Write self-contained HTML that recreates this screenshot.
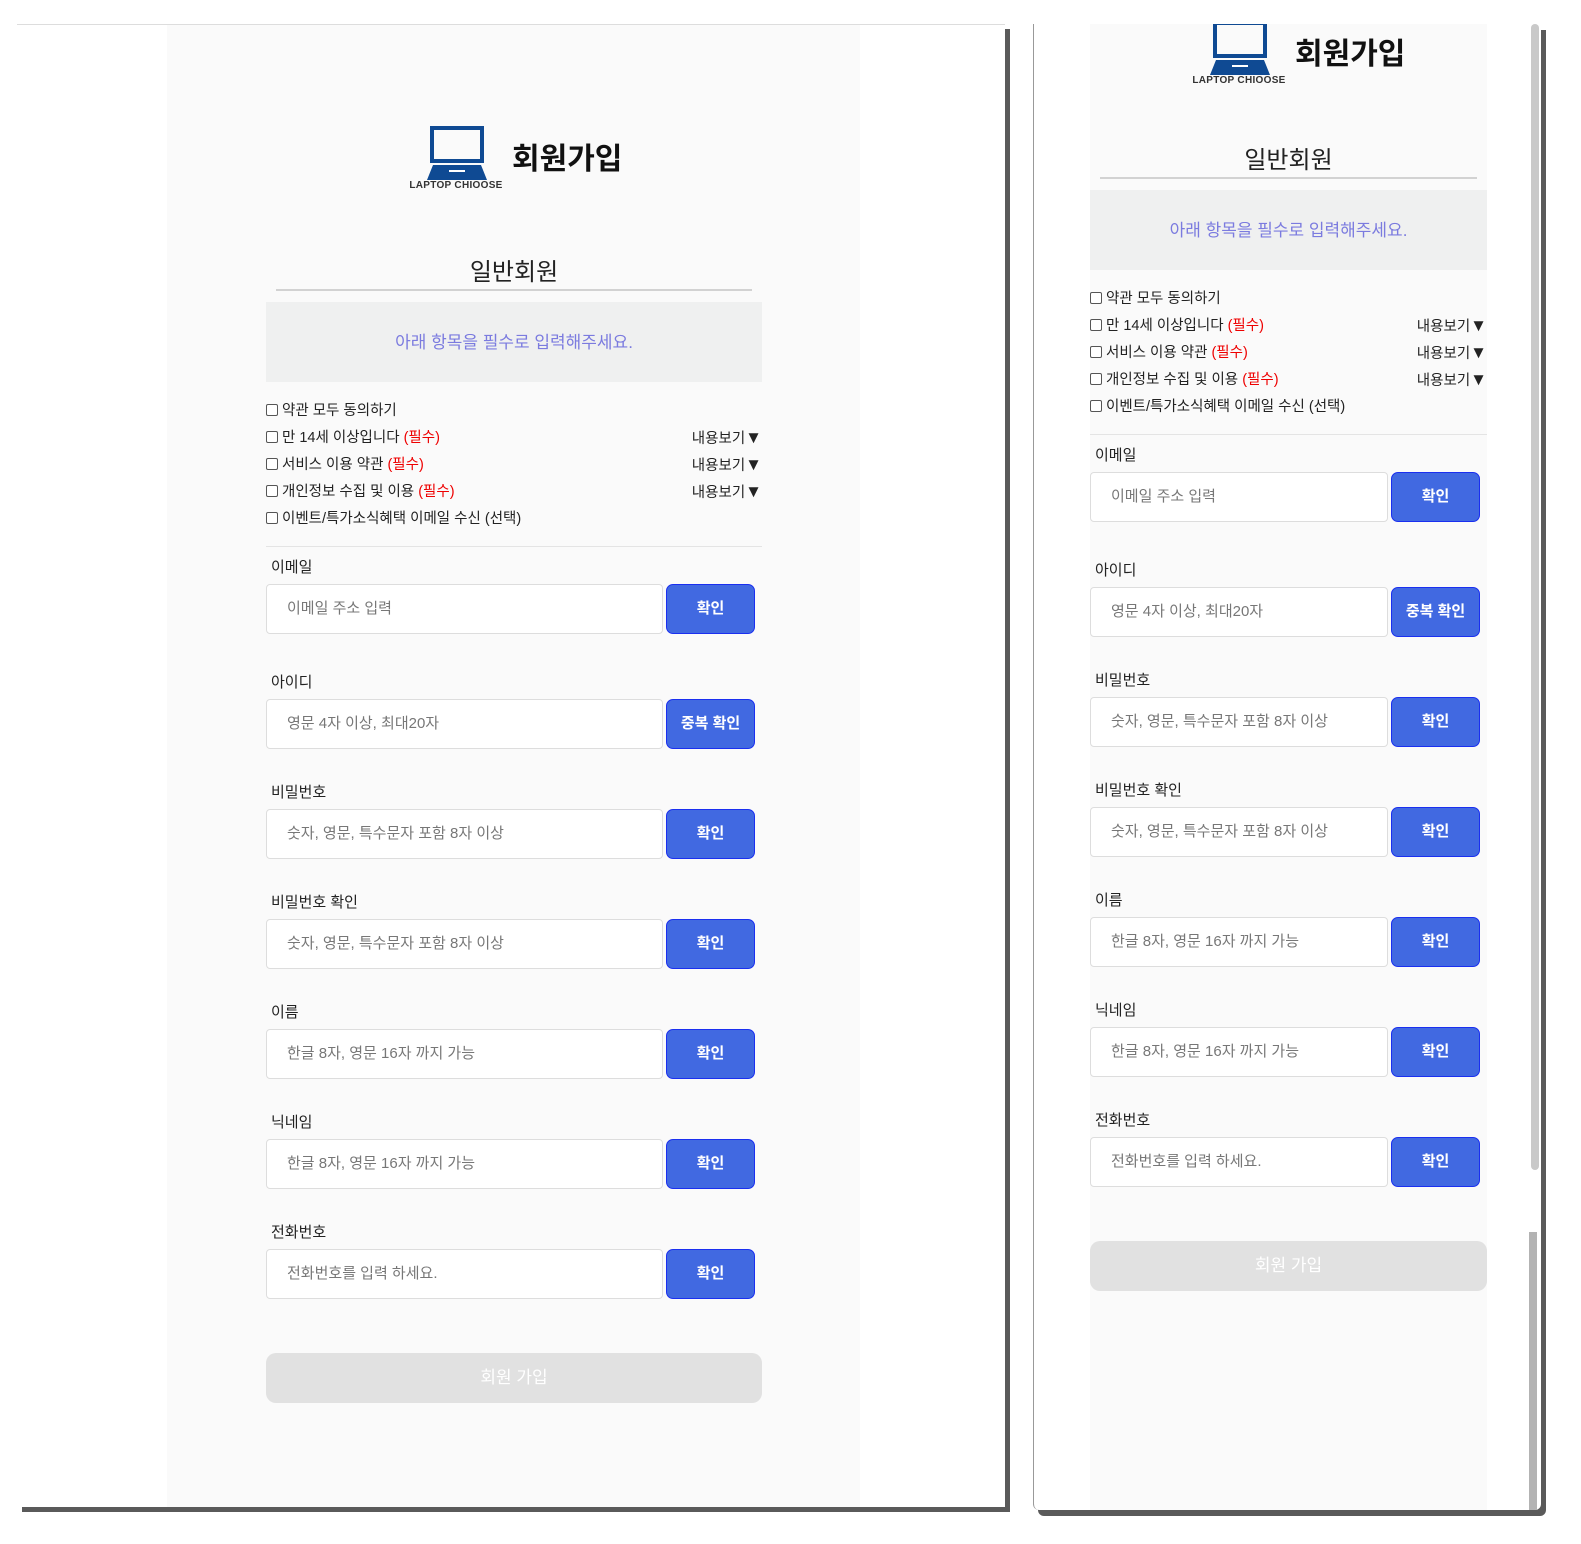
<!DOCTYPE html>
<html><head><meta charset="utf-8"><style>
*{box-sizing:border-box;margin:0;padding:0}
body{width:1581px;height:1544px;background:#fff;position:relative;overflow:hidden;font-family:"Liberation Sans","Noto Sans CJK KR",sans-serif;color:#222}
.abs{position:absolute}
.panelL{left:17px;top:24px;width:988px;height:1483px;background:#fff;border-top:1px solid #ddd;box-shadow:5px 5px 0 #5a5a5a}
.panelR{left:1033px;top:24px;width:508px;height:1486px;background:#fff;border-left:1px solid #999;box-shadow:5px 6px 0 #5a5a5a;overflow:hidden;border-radius:0 0 6px 6px}
.inner{background:#fafafa;top:0;bottom:0}
.form{position:absolute}
.logo{position:absolute;width:230px;height:80px}
.logo svg{position:absolute;left:19px;top:0}
.logo .lt{position:absolute;left:0;top:54px;width:96px;text-align:center;font:bold 10px "Liberation Sans",sans-serif;color:#333;letter-spacing:.3px}
.logo .tt{position:absolute;left:104px;top:8px;font-size:30px;font-weight:bold;color:#111;white-space:nowrap}
.sub{position:absolute;left:0;right:0;text-align:center;font-size:24px;color:#222}
.uline{position:absolute;left:10px;right:10px;height:2px;background:#d2d2d2}
.notice{position:absolute;left:0;right:0;height:80px;background:#eff0f0;color:#7b7bdf;font-size:17px;text-align:center;line-height:82px}
.row{position:absolute;left:0;right:0;height:20px;font-size:14.5px;line-height:20px;white-space:nowrap}
.cb{display:inline-block;width:12px;height:12px;border:1px solid #555;border-radius:2px;vertical-align:-1px;margin-right:4px;background:#fff}
.req{color:#e00}
.more{position:absolute;right:0;top:0}
.more b{font-size:17px;font-weight:normal;line-height:20px}
.hr{position:absolute;left:0;right:0;height:1px;background:#e4e4e4}
.lbl{position:absolute;left:5px;font-size:15px;color:#222}
.inp{position:absolute;left:0;height:50px;background:#fff;border:1px solid #ddd;border-radius:4px;font-size:15px;color:#777;line-height:48px;padding-left:20px;white-space:nowrap}
.btn{position:absolute;width:89px;height:50px;background:#4169e1;border:1.5px solid #1a2ff0;border-radius:7px;color:#fff;font-size:15px;font-weight:bold;text-align:center;line-height:47px}
.submit{position:absolute;left:0;right:0;height:50px;background:#e1e1e1;border-radius:10px;color:#fff;font-size:17px;text-align:center;line-height:50px}
</style></head><body>

<div class="abs panelL">
 <div class="abs inner" style="left:150px;width:693px"></div>
</div>
<div class="abs panelR">
 <div class="abs inner" style="left:56px;width:397px"></div>
 <div class="abs" style="left:497px;top:0;width:8px;height:1146px;background:#c9c9c9;border-radius:4px"></div>
 <div class="abs" style="left:495px;top:1208px;width:8px;height:280px;background:#b3b3b3"></div>
</div>

<div class="form" style="left:266px;top:100px;width:496px;height:1310px">
 <div class="logo" style="left:142px;top:26px">
  <svg width="60" height="54" viewBox="0 0 60 54"><rect x="5" y="2" width="50" height="33" fill="none" stroke="#0f4a93" stroke-width="4"/><path d="M6 39 H54 L60 54 H0 Z" fill="#0f4a93"/><rect x="22" y="44" width="16" height="2" fill="#fff"/></svg>
  <div class="lt">LAPTOP CHIOOSE</div>
  <div class="tt">회원가입</div>
 </div>
 <div class="sub" style="top:152px">일반회원</div>
 <div class="uline" style="top:189px"></div>
 <div class="notice" style="top:202px">아래 항목을 필수로 입력해주세요.</div>
 <div class="row" style="top:301px"><span class="cb"></span>약관 모두 동의하기</div>
 <div class="row" style="top:328px"><span class="cb"></span>만 14세 이상입니다 <span class="req">(필수)</span><span class="more">내용보기<b>▼</b></span></div>
 <div class="row" style="top:355px"><span class="cb"></span>서비스 이용 약관 <span class="req">(필수)</span><span class="more">내용보기<b>▼</b></span></div>
 <div class="row" style="top:382px"><span class="cb"></span>개인정보 수집 및 이용 <span class="req">(필수)</span><span class="more">내용보기<b>▼</b></span></div>
 <div class="row" style="top:409px"><span class="cb"></span>이벤트/특가소식혜택 이메일 수신 (선택)</div>
 <div class="hr" style="top:446px"></div>
 <div class="lbl" style="top:456px">이메일</div>
 <div class="inp" style="top:484px;width:397px">이메일 주소 입력</div><div class="btn" style="left:400px;top:484px">확인</div>
 <div class="lbl" style="top:571px">아이디</div>
 <div class="inp" style="top:599px;width:397px">영문 4자 이상, 최대20자</div><div class="btn" style="left:400px;top:599px">중복 확인</div>
 <div class="lbl" style="top:681px">비밀번호</div>
 <div class="inp" style="top:709px;width:397px">숫자, 영문, 특수문자 포함 8자 이상</div><div class="btn" style="left:400px;top:709px">확인</div>
 <div class="lbl" style="top:791px">비밀번호 확인</div>
 <div class="inp" style="top:819px;width:397px">숫자, 영문, 특수문자 포함 8자 이상</div><div class="btn" style="left:400px;top:819px">확인</div>
 <div class="lbl" style="top:901px">이름</div>
 <div class="inp" style="top:929px;width:397px">한글 8자, 영문 16자 까지 가능</div><div class="btn" style="left:400px;top:929px">확인</div>
 <div class="lbl" style="top:1011px">닉네임</div>
 <div class="inp" style="top:1039px;width:397px">한글 8자, 영문 16자 까지 가능</div><div class="btn" style="left:400px;top:1039px">확인</div>
 <div class="lbl" style="top:1121px">전화번호</div>
 <div class="inp" style="top:1149px;width:397px">전화번호를 입력 하세요.</div><div class="btn" style="left:400px;top:1149px">확인</div>
 <div class="submit" style="top:1253px">회원 가입</div>
</div>

<div class="abs" style="left:1034px;top:24px;width:500px;height:1480px;overflow:hidden">
<div class="form" style="left:56px;top:-36px;width:397px;height:1310px">
 <div class="logo" style="left:101px;top:33px">
  <svg width="60" height="54" viewBox="0 0 60 54"><rect x="5" y="2" width="50" height="33" fill="none" stroke="#0f4a93" stroke-width="4"/><path d="M6 39 H54 L60 54 H0 Z" fill="#0f4a93"/><rect x="22" y="44" width="16" height="2" fill="#fff"/></svg>
  <div class="lt">LAPTOP CHIOOSE</div>
  <div class="tt">회원가입</div>
 </div>
 <div class="sub" style="top:152px">일반회원</div>
 <div class="uline" style="top:189px"></div>
 <div class="notice" style="top:202px">아래 항목을 필수로 입력해주세요.</div>
 <div class="row" style="top:301px"><span class="cb"></span>약관 모두 동의하기</div>
 <div class="row" style="top:328px"><span class="cb"></span>만 14세 이상입니다 <span class="req">(필수)</span><span class="more">내용보기<b>▼</b></span></div>
 <div class="row" style="top:355px"><span class="cb"></span>서비스 이용 약관 <span class="req">(필수)</span><span class="more">내용보기<b>▼</b></span></div>
 <div class="row" style="top:382px"><span class="cb"></span>개인정보 수집 및 이용 <span class="req">(필수)</span><span class="more">내용보기<b>▼</b></span></div>
 <div class="row" style="top:409px"><span class="cb"></span>이벤트/특가소식혜택 이메일 수신 (선택)</div>
 <div class="hr" style="top:446px"></div>
 <div class="lbl" style="top:456px">이메일</div>
 <div class="inp" style="top:484px;width:298px">이메일 주소 입력</div><div class="btn" style="left:301px;top:484px">확인</div>
 <div class="lbl" style="top:571px">아이디</div>
 <div class="inp" style="top:599px;width:298px">영문 4자 이상, 최대20자</div><div class="btn" style="left:301px;top:599px">중복 확인</div>
 <div class="lbl" style="top:681px">비밀번호</div>
 <div class="inp" style="top:709px;width:298px">숫자, 영문, 특수문자 포함 8자 이상</div><div class="btn" style="left:301px;top:709px">확인</div>
 <div class="lbl" style="top:791px">비밀번호 확인</div>
 <div class="inp" style="top:819px;width:298px">숫자, 영문, 특수문자 포함 8자 이상</div><div class="btn" style="left:301px;top:819px">확인</div>
 <div class="lbl" style="top:901px">이름</div>
 <div class="inp" style="top:929px;width:298px">한글 8자, 영문 16자 까지 가능</div><div class="btn" style="left:301px;top:929px">확인</div>
 <div class="lbl" style="top:1011px">닉네임</div>
 <div class="inp" style="top:1039px;width:298px">한글 8자, 영문 16자 까지 가능</div><div class="btn" style="left:301px;top:1039px">확인</div>
 <div class="lbl" style="top:1121px">전화번호</div>
 <div class="inp" style="top:1149px;width:298px">전화번호를 입력 하세요.</div><div class="btn" style="left:301px;top:1149px">확인</div>
 <div class="submit" style="top:1253px">회원 가입</div>
</div>
</div>
</body></html>
